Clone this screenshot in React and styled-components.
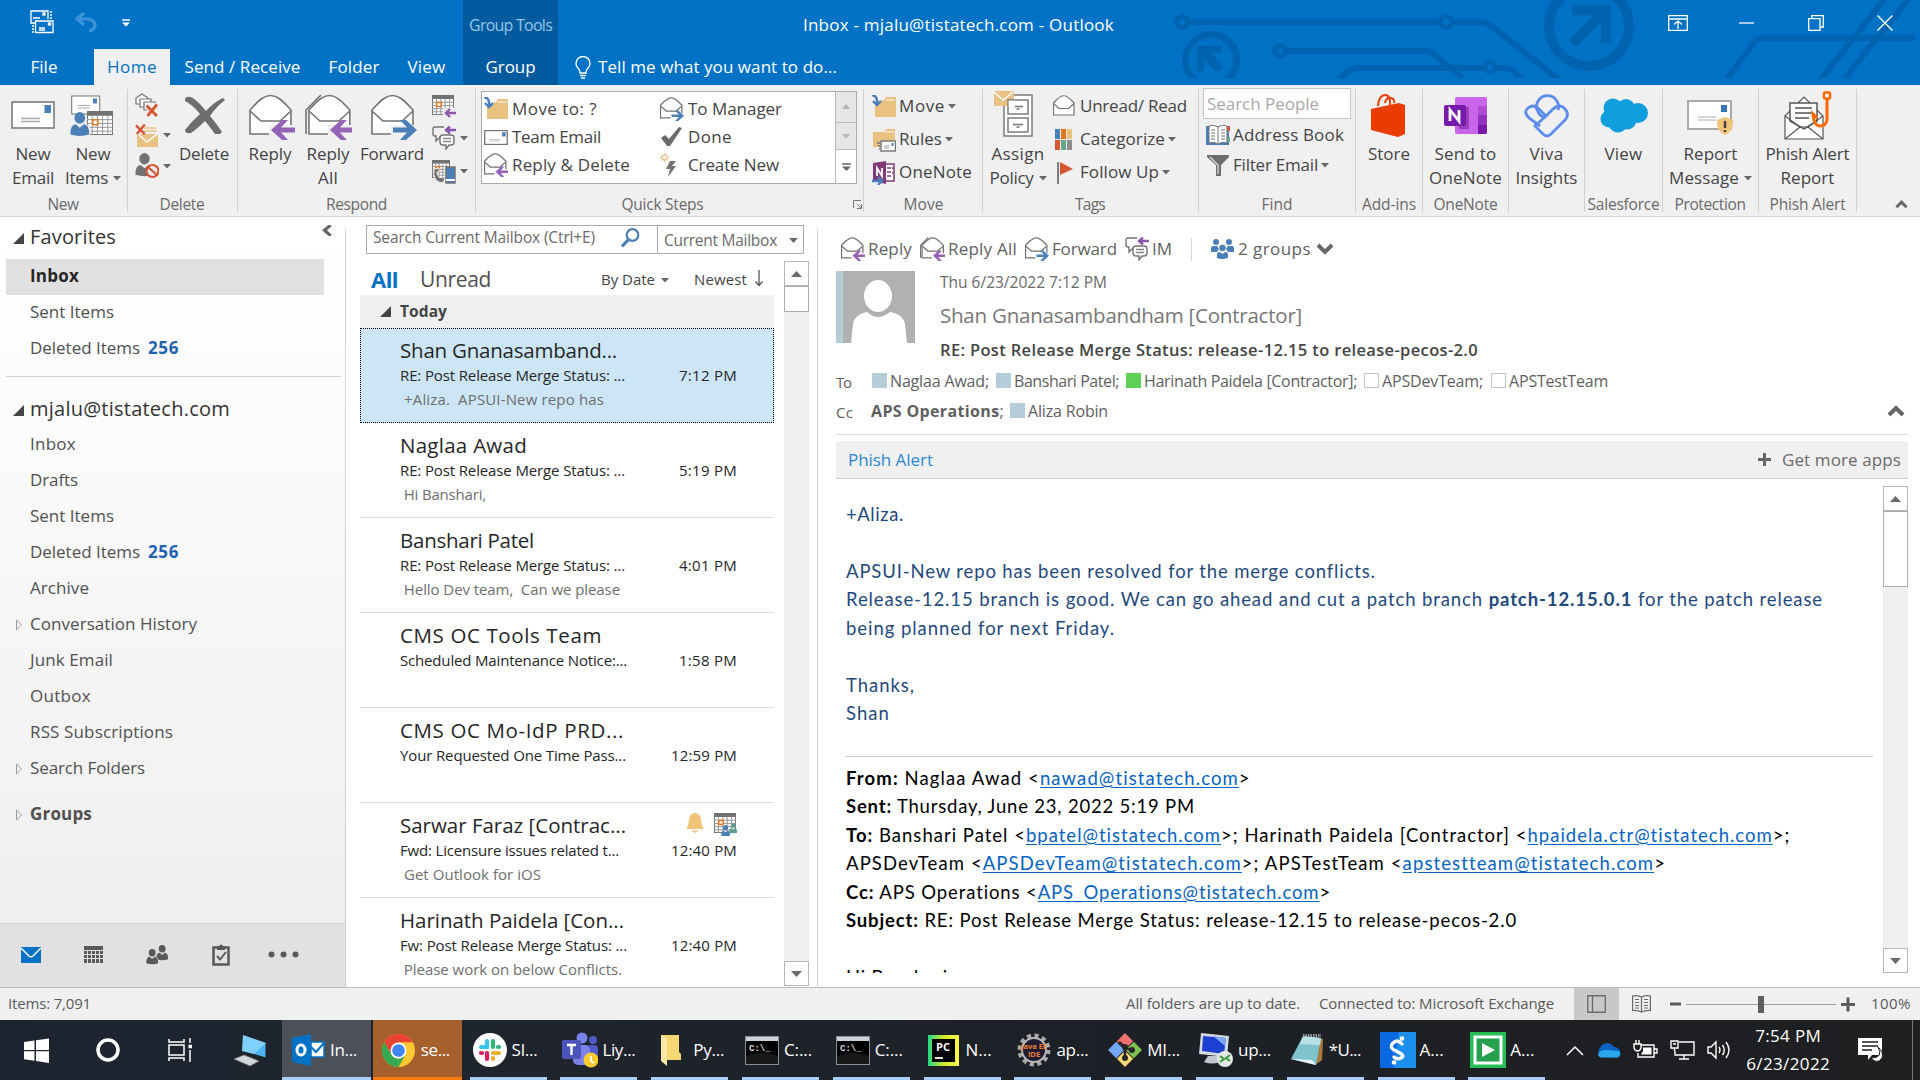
import React, { useLayoutEffect, useRef } from "react";
import styled, { createGlobalStyle, css } from "styled-components";

const Global = createGlobalStyle`
  * { box-sizing: border-box; }
  body { margin: 0; overflow: hidden; background: #fff; }
  svg { display: block; flex: none; }
`;

/* ---------- text ---------- */
const TextSpan = styled.span`
  display: inline-block;
  flex: none;
  white-space: pre;
  padding-bottom: var(--lift, 2px);
  font-size: ${(p) => p.$size || 17}px;
  font-weight: ${(p) => p.$weight || 400};
  color: ${(p) => p.$color || "inherit"};
  margin-left: ${(p) => p.$ml || 0}px;
`;

/* A label whose tracking is spread so that it fills a set width. */
function Text({ w, children, size, weight, color, ml }) {
  const ref = useRef(null);
  useLayoutEffect(() => {
    const el = ref.current;
    if (!w || !el) return;
    el.style.letterSpacing = "0px";
    const natural = el.getBoundingClientRect().width;
    const count = el.textContent.length;
    if (count > 0) el.style.letterSpacing = `${((w + 1 - natural) / count).toFixed(3)}px`;
  }, [w, children]);
  return (
    <TextSpan ref={ref} $size={size} $weight={weight} $color={color} $ml={ml}>
      {children}
    </TextSpan>
  );
}

const Window = styled.div`
  width: 1920px;
  height: 1080px;
  display: flex;
  flex-direction: column;
  font-family: "Open Sans", "Noto Sans", sans-serif;
  line-height: 1;
  color: #444;
  background: #fff;
`;

/* ---------- header ---------- */
const Header = styled.header`
  position: relative;
  height: 85px;
  flex: none;
  background: #0072c6;
  color: #fff;
`;
const Art = styled.svg`
  position: absolute;
  right: 0;
  top: 0;
`;
const TitleRow = styled.div`
  --lift: 0px;
  position: relative;
  height: 49px;
  display: flex;
`;
const QuickBar = styled.div`
  width: 463px;
  padding: 10px 0 0 30px;
  display: flex;
  gap: 21px;
`;
const ContextHead = styled.div`
  width: 95px;
  background: #005a9e;
  color: #94c6ea;
  display: flex;
  align-items: center;
  justify-content: center;
`;
const WindowTitle = styled.div`
  margin-left: 245px;
  display: flex;
  align-items: center;
  flex: 1;
`;
const WindowButton = styled.div`
  width: 69px;
  height: 46px;
  display: flex;
  align-items: center;
  justify-content: center;
`;
const WindowButtons = styled.div`
  display: flex;
  padding-right: 1px;
`;
const TabRow = styled.div`
  position: relative;
  height: 36px;
  display: flex;
  align-items: stretch;
`;
const Tab = styled.div`
  width: ${(p) => p.$w}px;
  margin-left: ${(p) => p.$ml || 0}px;
  display: flex;
  align-items: center;
  justify-content: center;
  ${(p) => p.$active && css`background: #f0f0f0; color: #0072c6;`}
  ${(p) => p.$context && css`background: #005a9e;`}
`;
const TellMe = styled.div`
  display: flex;
  align-items: center;
  padding-left: 17px;
  gap: 7px;
`;

function HeaderArt() {
  const c = "#0063b0";
  return (
    <Art width="750" height="78" viewBox="1170 0 750 78" fill="none" stroke={c} strokeWidth="6">
      <circle cx="1182" cy="22" r="5.5" strokeWidth="5" />
      <path d="M1188 22H1440M1452 22H1481Q1486 22 1490 25L1562 82" />
      <circle cx="1446" cy="22" r="5.5" strokeWidth="4.5" />
      <circle cx="1280" cy="51" r="5.5" strokeWidth="5" />
      <path d="M1286 51H1424Q1430 51 1434 54L1466 81" />
      <path d="M1335 82L1350 70Q1353 68 1358 68H1484M1496 68H1504Q1509 68 1513 71L1524 81" />
      <circle cx="1490" cy="67" r="5" strokeWidth="4.5" />
      <circle cx="1211" cy="60" r="25.5" strokeWidth="7" />
      <path fill={c} stroke="none" d="M1197 46H1222V53H1211L1224 67L1217 73L1204 59V71H1197Z" />
      <circle cx="1589" cy="26" r="40" strokeWidth="10" />
      <path fill={c} stroke="none" d="M1572 5H1611V43H1601V22L1576 47L1569 40L1594 15H1572Z" />
      <path d="M1724 82L1754 43Q1758 38 1764 38H1915M1817 84L1888 -5M1840 84L1912 -5" />
    </Art>
  );
}

/* ---------- ribbon ---------- */
const Ribbon = styled.div`
  height: 132px;
  flex: none;
  display: flex;
  background: #f0f0f0;
  border-bottom: 1px solid #d2d2d2;
`;
const GroupBox = styled.section`
  width: ${(p) => p.$w}px;
  flex: none;
  display: flex;
  flex-direction: column;
  background: linear-gradient(#d0d0d0, #d0d0d0) right 4px / 1px 123px no-repeat;
`;
const GroupBody = styled.div`
  height: 108px;
  display: flex;
  padding-left: ${(p) => p.$pl || 0}px;
`;
const GroupLabel = styled.div`
  --lift: 0px;
  height: 23px;
  display: flex;
  align-items: center;
  justify-content: center;
  color: #6a6a6a;
  padding-right: ${(p) => p.$shift || 0}px;
`;
function Group({ w, pl, label, lw, shift, children, extra }) {
  return (
    <GroupBox $w={w}>
      <GroupBody $pl={pl}>{children}</GroupBody>
      <GroupLabel $shift={shift}>
        {label && <Text size={15.5} w={lw}>{label}</Text>}
        {extra}
      </GroupLabel>
    </GroupBox>
  );
}
const BigButton = styled.div`
  width: ${(p) => p.$w}px;
  flex: none;
  display: flex;
  flex-direction: column;
  align-items: center;
`;
const BigIcon = styled.div`
  height: 57px;
  padding-top: ${(p) => p.$top}px;
  margin-left: ${(p) => p.$shift || 0}px;
`;
const BigLine = styled.div`
  height: 24px;
  display: flex;
  align-items: center;
  gap: 5px;
`;
function Big({ w, top, shift, icon, lines, caret }) {
  return (
    <BigButton $w={w}>
      <BigIcon $top={top} $shift={shift}>{icon}</BigIcon>
      {lines.map(([t, tw], i) => (
        <BigLine key={i}>
          <Text w={tw}>{t}</Text>
          {caret && i === lines.length - 1 && <Caret />}
        </BigLine>
      ))}
    </BigButton>
  );
}
const Stack = styled.div`
  width: ${(p) => p.$w}px;
  flex: none;
  display: flex;
  flex-direction: column;
  padding-top: ${(p) => p.$top || 0}px;
  padding-left: ${(p) => p.$pl || 0}px;
  gap: ${(p) => p.$gap || 0}px;
`;
const SmallRow = styled.div`
  height: ${(p) => p.$h || 33}px;
  display: flex;
  align-items: center;
  gap: ${(p) => (p.$gap === undefined ? 4 : p.$gap)}px;
`;
const Caret = ({ s = 8, c = "#666" }) => (
  <svg width={s} height={s / 2 + 1} viewBox="0 0 8 5"><path d="M0 0H8L4 4.6Z" fill={c} /></svg>
);
const Gallery = styled.div`
  width: 376px;
  height: 93px;
  margin-top: 6px;
  background: #fff;
  border: 1px solid #ababab;
  display: flex;
`;
const GalleryCol = styled.div`
  width: ${(p) => p.$w}px;
  padding: 3px 0 0 2px;
`;
const GalleryScroll = styled.div`
  width: 21px;
  margin-left: auto;
  border-left: 1px solid #b8b8b8;
  display: flex;
  flex-direction: column;
`;
const GalleryCell = styled.div`
  flex: ${(p) => p.$h} 0 0;
  background: ${(p) => (p.$on ? "#fff" : "#e6e6e6")};
  border-bottom: ${(p) => (p.$on ? "none" : "1px solid #b8b8b8")};
  display: flex;
  align-items: center;
  justify-content: center;
`;
const PeopleSearch = styled.div`
  --lift: 0px;
  width: 148px;
  height: 31px;
  margin: 0 0 2px -3px;
  border: 1px solid #c6c6c6;
  background: #fff;
  color: #a8a8a8;
  display: flex;
  align-items: center;
  padding-left: 3px;
`;
const RibbonEnd = styled.div`
  flex: 1;
  display: flex;
  align-items: flex-end;
  justify-content: flex-end;
  padding: 0 12px 7px 0;
`;
const Launcher = styled.svg`
  margin-left: 149px;
  margin-right: -158px;
`;

/* ---------- icons ---------- */
const GR = "#737373", BL = "#4a7fb8", PU = "#9463b8", TAN = "#e9c282", RED = "#d65532";

function OpenMail({ s = 46, arrow, all }) {
  const sw = s > 30 ? 1.6 : 2.4;
  const col = arrow === "fwd" ? BL : PU;
  return (
    <svg width={all ? s * 1.04 : s} height={s} viewBox={all ? "-3 0 48 46" : "0 0 46 46"}>
      {all && <path d="M-2 40V16L13 1" fill="none" stroke={GR} strokeWidth={sw} />}
      <path d="M1 16C7 10 13 1.500 21.500 1.500S36 10 42 16V40H1Z" fill="#fff" stroke={GR} strokeWidth={sw} />
      <path d="M1 17L12 27H31L42 17" fill="none" stroke={GR} strokeWidth={sw} />
      {arrow && <path d="M20 31H46V46H20Z" fill={s > 30 ? "#f0f0f0" : "#fff"} />}
      {arrow === "reply" && <path d="M22 36L33 26H39L32 33.500H46V38.500H32L39 46H33Z" fill={col} />}
      {arrow === "fwd" && <path d="M46 36L35 26H29L36 33.500H22V38.500H36L29 46H35Z" fill={col} />}
    </svg>
  );
}
const MailCard = ({ w = 44, h = 28 }) => (
  <svg width={w} height={h} viewBox="0 0 44 28">
    <rect x="1" y="1" width="42" height="26" fill="#fff" stroke={GR} strokeWidth={w > 30 ? 1.5 : 2.4} />
    <rect x="33.500" y="4" width="6.500" height="8" fill={BL} />
    <path d="M10 17.500H29M10 20.500H29" stroke="#aaa" strokeWidth="1.300" />
  </svg>
);
const Person = ({ x = 0, y = 0, k = 1, c = BL }) => (
  <g transform={`translate(${x} ${y}) scale(${k})`} fill={c}>
    <ellipse cx="10" cy="6" rx="5.500" ry="6" />
    <path d="M0.500 23Q0 13 6 12.500L10 16L14 12.500Q20 13 19.500 23Q10 26 0.500 23Z" />
  </g>
);
const CalGrid = ({ x = 0, y = 0, w = 24, h = 22 }) => (
  <g transform={`translate(${x} ${y})`}>
    <rect x=".5" y=".5" width={w - 1} height={h - 1} fill="#fff" stroke={GR} />
    <rect width={w} height={h * 0.2} fill={GR} />
    {[0.2, 0.4, 0.6, 0.8].map((f) => (
      <path key={f} d={`M${w * f} ${h * 0.2}V${h}M0 ${h * (0.2 + f * 0.8)}H${w}`} stroke="#999" strokeWidth="1" />
    ))}
    <rect x={w * 0.22} y={h * 0.37} width={w * 0.2} height={h * 0.2} fill="#fff" stroke="#e07a28" strokeWidth="1.500" />
  </g>
);
const NewItems = () => (
  <svg width="44" height="42" viewBox="0 0 44 42">
    <rect x="1.700" y="1" width="28" height="18" fill="#fff" stroke={GR} />
    <rect x="23" y="3.500" width="4" height="5" fill={BL} />
    <path d="M8 10.500H20M8 13H20" stroke="#aaa" />
    <CalGrid x={17} y={16} w={26} h={24} />
    <path d="M0 20H17V30H20V42H0Z" fill="#f0f0f0" />
    <Person x={0} y={17} k={0.98} />
  </svg>
);
const Xmark = ({ x, y, k = 1, c = RED, sw = 3 }) => (
  <path transform={`translate(${x} ${y}) scale(${k})`} d="M0 1L11 12M11 0L1 12" stroke={c} strokeWidth={sw} fill="none" />
);
const Ignore = () => (
  <svg width="24" height="24" viewBox="0 0 24 24" fill="#fff" stroke={GR} strokeWidth="1.200">
    <path d="M1 11V5L7 1L13 5V11Z" /><path d="M5 14V6H16V14Z" /><path d="M9 17V9H20V17Z" />
    <path d="M12 10H24V24H12Z" fill="#f0f0f0" stroke="none" /><Xmark x={11.500} y={11.500} k={0.95} />
  </svg>
);
const CleanUp = () => (
  <svg width="24" height="24" viewBox="0 0 24 24">
    <path d="M9 4H21M9 7H22" stroke={TAN} strokeWidth="1.500" />
    <rect x="2" y="10" width="21" height="13" fill={TAN} />
    <path d="M3 10L12 18L22 10" fill="none" stroke="#fff" strokeWidth="1.500" /><Xmark x={1} y={0.500} k={0.8} />
  </svg>
);
const Junk = () => (
  <svg width="24" height="26" viewBox="0 0 24 26">
    <Person x={0} y={0} k={0.95} c={GR} />
    <circle cx="17.500" cy="18" r="6" fill="#f0f0f0" stroke={RED} strokeWidth="2.200" />
    <path d="M13 14L22 22" stroke={RED} strokeWidth="2.200" />
  </svg>
);
const DeleteX = () => (
  <svg width="42" height="38" viewBox="0 0 42 38">
    <path d="M1 3Q3-1 9 2Q17 8 22 15Q30 6 39 2L41 4Q32 11 26 20Q32 27 38 36L36 38H31Q26 31 21 25Q13 33 7 37Q1 38 1 34Q7 26 16 18Q9 9 1 5Z" fill="#6d6d6d" />
  </svg>
);
const Meeting = () => (
  <svg width="24" height="23" viewBox="0 0 24 23">
    <CalGrid x={0} y={0} w={22} h={20} /><path d="M11 13H24V23H11Z" fill="#f0f0f0" />
    <path d="M24 18H15M18 14L14 18L18 22" stroke="#8b57ad" strokeWidth="2.400" fill="none" />
  </svg>
);
const IM = () => (
  <svg width="24" height="24" viewBox="0 0 24 24" fill="#fff" stroke={GR} strokeWidth="1.400">
    <path d="M12 1H3Q1 1 1 3V8Q1 10 3 10H4V15L9 10" fill="none" />
    <path d="M11 9H19Q22 9 22 12V16Q22 19 19 19H17L14 23V19H11Q8 19 8 16V12Q8 9 11 9Z" />
    <path d="M11 12.500H19M11 15.500H19" stroke="#888" />
    <path d="M24 4H15M18 0.500L14 4L18 7.500" stroke="#8b57ad" strokeWidth="2.400" fill="none" />
  </svg>
);
const Phone = () => (
  <svg width="24" height="24" viewBox="0 0 24 24">
    <CalGrid x={0} y={0} w={18} h={18} />
    <path d="M2 9Q0 22 11 23L13 18L9 17L8 18Q5 15 5 12L7 12V8Z" fill={GR} stroke="#f0f0f0" />
    <rect x="14" y="7" width="9" height="16" fill={BL} stroke={GR} strokeWidth="1.500" />
    <path d="M14 20H23" stroke="#fff" strokeWidth="2" />
  </svg>
);
const FolderMove = ({ mail }) => (
  <svg width="24" height="24" viewBox="0 0 24 24">
    <path d={mail ? "M1 4H12L14 1H23V19H1Z" : "M3 7L12 5L14 2H24V22H3Z"} fill={TAN} />
    <path d={mail ? "M13 4H22" : "M14 5H23"} stroke="#f8e8cc" strokeWidth="1.500" />
    {!mail && <path d="M0 0Q6 1 5 9M1 6L5 10L9 6" fill="none" stroke={BL} strokeWidth="2.400" />}
    {mail && <><rect x="9" y="13" width="14.500" height="10" fill="#fff" stroke={GR} strokeWidth="1.400" /><path d="M12 18H17M12 20H17" stroke="#999" /><rect x="19.500" y="15" width="2" height="3" fill={BL} /><path d="M5 15H8M6 18H8M7 21H8" stroke={GR} strokeWidth="1.500" /></>}
  </svg>
);
const Check = () => (
  <svg width="24" height="20" viewBox="0 0 24 20"><path d="M1 11L5 8L9 12L19 0L22 1L10 19H7Z" fill="#6a6a6a" /></svg>
);
const Bolt = () => (
  <svg width="24" height="24" viewBox="0 0 24 24">
    <path d="M10 8H16L12 13H16L8 24L10 16H6Z" fill={GR} />
    <path d="M4.500 0V9M0 4.500H9M1.500 1.500L7.500 7.500M7.500 1.500L1.500 7.500" stroke={TAN} strokeWidth="1.400" />
    <circle cx="4.500" cy="4.500" r="1.800" fill="#fff" />
  </svg>
);
const OneNoteMove = () => (
  <svg width="24" height="24" viewBox="0 0 24 24">
    <rect x="12" y="3" width="10" height="17" fill="#fff" stroke="#80397b" strokeWidth="1.500" />
    <path d="M15 7H19M15 11H19M15 15H19M21 6V8M21 11V13" stroke="#80397b" strokeWidth="1.500" />
    <path d="M1 2L14 0V23L1 20Z" fill="#80397b" />
    <path d="M5 15V7L10 15V7" stroke="#fff" strokeWidth="1.800" fill="none" />
    <path d="M0 20H9M6 16L10 20L6 24" stroke={BL} strokeWidth="2.400" fill="none" />
  </svg>
);
const Cabinet = () => (
  <svg width="40" height="46" viewBox="0 0 40 46" fill="#fff" stroke={GR} strokeWidth="1.400">
    <rect x="10" y="4" width="28" height="41" />
    <rect x="14" y="9" width="20" height="14" /><rect x="14" y="27" width="20" height="14" />
    <path d="M19 15.500H29M19 33.500H29" /><path d="M22.500 18H25.500M22.500 36H25.500" />
    <rect x="0" y="0" width="20" height="15" fill={TAN} stroke="none" />
    <path d="M0 1L9 9L19 1" stroke="#fff" fill="none" />
    <path d="M14 15V9H20" /><path d="M14.700 9.700H21V16H14.700Z" stroke="none" />
  </svg>
);
const Swatches = () => (
  <svg width="24" height="22" viewBox="0 0 24 22">
    <rect x="2" width="5" height="10" fill={BL} /><rect x="8" width="5" height="10" fill="#e2761d" /><rect x="14" width="5" height="10" fill={TAN} />
    <rect x="2" y="11" width="5" height="10" fill={RED} /><rect x="8" y="11" width="5" height="10" fill="#68a58f" /><rect x="14" y="11" width="5" height="10" fill="#8c8c8c" />
  </svg>
);
const Flag = () => (
  <svg width="24" height="24" viewBox="0 0 24 24"><path d="M5 1V23" stroke={GR} strokeWidth="1.800" /><path d="M7 1L20 8L7 14Z" fill={RED} /></svg>
);
const Book = () => (
  <svg width="24" height="21" viewBox="0 0 24 21">
    <path d="M0 1H23V20H0Z" fill={BL} /><path d="M20 1H24V6H20Z" fill={RED} /><path d="M20 12H24V17H20Z" fill="#68a58f" />
    <path d="M3 1Q8-1 12 2Q16-1 21 1V18Q16 16 12 19Q8 16 3 18Z" fill="#fff" stroke={GR} />
    <path d="M12 2V18M5 5H9M5 8H9M5 11H9M5 14H9M15 5H19M15 8H19M15 11H19M15 14H19" stroke={GR} />
  </svg>
);
const Funnel = () => (
  <svg width="24" height="22" viewBox="0 0 24 22"><path d="M1 0H23V2L15 10V21L10 21V10L1 2Z" fill="#6d6d6d" /><path d="M4 2L12 10V19" fill="none" stroke="#e8e8e8" strokeWidth="1.200" /></svg>
);
const Store = () => (
  <svg width="36" height="43" viewBox="0 0 36 43">
    <path d="M7 12Q8 1 14 1Q20 1 19 11M14 9Q15 3 20 4Q24 5 23 9" fill="none" stroke="#eb3c00" strokeWidth="2" />
    <path d="M0 15L28 9L34 11V40L27 43L0 36Z" fill="#eb3c00" />
  </svg>
);
const OneNoteApp = () => (
  <svg width="43" height="37" viewBox="0 0 43 37">
    <rect x="11" width="32" height="37" rx="2" fill="#ca64ea" />
    <path d="M34 9H43V18H34Z" fill="#ae4bd5" /><path d="M34 18H43V28H34Z" fill="#9332bf" /><path d="M34 28H43V35Q43 37 41 37H34Z" fill="#7719aa" />
    <path d="M15 10H25V32H15Z" fill="#5a1580" opacity=".45" /><rect y="8" width="22" height="21" rx="2" fill="#7719aa" />
    <path d="M6 24V13L15 24V13" stroke="#fff" strokeWidth="2.800" fill="none" />
  </svg>
);
const Viva = () => (
  <svg width="46" height="46" viewBox="0 0 46 46" fill="none" stroke="#5b8def" strokeWidth="2.800">
    <path d="M13 18A11 11 0 1 1 34 18" /><path d="M13 17Q15 24 20 25" />
    <path d="M16 34L5 26Q-1 20 4 16Q9 12 14 16L22 24L29 17Q36 11 41 17Q46 22 41 28L27 42Q23 46 19 42L10 33" />
    <path d="M22 24L11 34" />
  </svg>
);
const Salesforce = () => (
  <svg width="48" height="35" viewBox="0 0 48 35" fill="#0f9fdf">
    <circle cx="13" cy="10" r="9.500" /><circle cx="26" cy="10" r="9" /><circle cx="38" cy="15" r="10" /><circle cx="9" cy="21" r="8.500" /><circle cx="18" cy="25" r="9.500" /><circle cx="27" cy="22" r="9.500" />
  </svg>
);
const ReportMail = () => (
  <svg width="47" height="37" viewBox="0 0 47 37">
    <rect x="1" y="2" width="43" height="28" fill="#fff" stroke="#aaa" strokeWidth="2" />
    <rect x="34" y="6" width="6" height="7" fill="#3a75b5" /><path d="M11 18H29M11 21H29" stroke="#ccc" strokeWidth="1.500" />
    <path d="M38 18L46 21Q47 32 38 36Q29 32 30 21Z" fill="#efc477" /><path d="M38 22V29M38 31V33" stroke="#444" strokeWidth="2.500" />
  </svg>
);
const PhishHook = () => (
  <svg width="48" height="49" viewBox="0 0 48 49">
    <path d="M1 25L20 6L39 25V48H1Z" fill="#fff" stroke="#555" strokeWidth="1.200" />
    <path d="M6 30V12H33V30L20 38Z" fill="#fff" stroke="#555" strokeWidth="1.500" />
    <path d="M11 17H28M11 22H28M11 27H25" stroke="#555" strokeWidth="1.300" />
    <path d="M1 25L16 36H24L39 25M1 48L16 36M39 48L24 36" fill="none" stroke="#555" strokeWidth="1.200" />
    <path d="M43 8V29Q42 35 36 35Q30 35 29 23L33 27" fill="none" stroke="#ff6a00" strokeWidth="3" />
    <rect x="40" y="1.500" width="6" height="6" rx="1" fill="#fff" stroke="#ff6a00" strokeWidth="2.600" />
  </svg>
);
const Chevron = ({ dir = "down", w = 18, sw = 4, c = "#666" }) => {
  const d = { down: "M2 2L9 9L16 2", up: "M2 10L9 3L16 10", left: "M12 0L5 6L12 12" }[dir];
  return <svg width={w} height={(w * 12) / 18} viewBox="0 0 18 12"><path d={d} fill="none" stroke={c} strokeWidth={sw} /></svg>;
};

function RibbonBar() {
  return (
    <Ribbon>
      <Group w={128} pl={3} label="New" lw={30} shift={2}>
        <Big w={60} top={16} icon={<MailCard />} lines={[["New", 34], ["Email", 41]]} />
        <Big w={60} top={10} shift={-3} icon={<NewItems />} lines={[["New", 34], ["Items", 42]]} caret />
      </Group>
      <Group w={110} pl={7} label="Delete" lw={44} shift={2}>
        <Stack $w={42} $top={5}>
          <SmallRow $h={29}><Ignore /></SmallRow>
          <SmallRow $h={33}><CleanUp /><Caret /></SmallRow>
          <SmallRow $h={28}><Junk /><Caret /></SmallRow>
        </Stack>
        <Big w={54} top={11} shift={2} icon={<DeleteX />} lines={[["Delete", 49]]} />
      </Group>
      <Group w={238} pl={3} label="Respond" lw={60} shift={1}>
        <Big w={58} top={9} shift={4} icon={<OpenMail arrow="reply" />} lines={[["Reply", 42]]} />
        <Big w={58} top={9} shift={1} icon={<OpenMail arrow="reply" all />} lines={[["Reply", 42], ["All", 19]]} />
        <Big w={70} top={9} shift={4} icon={<OpenMail arrow="fwd" />} lines={[["Forward", 63]]} />
        <Stack $w={40} $top={6} $pl={5}>
          <SmallRow $h={30}><Meeting /></SmallRow>
          <SmallRow $h={34}><IM /><Caret /></SmallRow>
          <SmallRow $h={33}><Phone /><Caret /></SmallRow>
        </Stack>
      </Group>
      <Group w={388} pl={5} label="Quick Steps" lw={81} shift={15}
        extra={<Launcher width="9" height="9" viewBox="0 0 9 9"><path d="M.5 8V.5H8M4 4L8 8M8.500 4V8.500H4" fill="none" stroke="#777" /></Launcher>}>
        <Gallery>
          <GalleryCol $w={176}>
            <SmallRow $h={28}><FolderMove /><Text w={84}>Move to: ?</Text></SmallRow>
            <SmallRow $h={28}><MailCard w={24} h={15} /><Text w={88}>Team Email</Text></SmallRow>
            <SmallRow $h={28}><OpenMail s={24} arrow="reply" /><Text w={117}>Reply & Delete</Text></SmallRow>
          </GalleryCol>
          <GalleryCol $w={160}>
            <SmallRow $h={28}><OpenMail s={24} arrow="fwd" /><Text w={93}>To Manager</Text></SmallRow>
            <SmallRow $h={28}><Check /><Text w={43}>Done</Text></SmallRow>
            <SmallRow $h={28}><Bolt /><Text w={90}>Create New</Text></SmallRow>
          </GalleryCol>
          <GalleryScroll>
            <GalleryCell $h={31}><svg width="8" height="5"><path d="M0 5H8L4 0Z" fill="#b5b5b5" /></svg></GalleryCell>
            <GalleryCell $h={28}><Caret c="#b5b5b5" /></GalleryCell>
            <GalleryCell $h={34} $on><svg width="9" height="8"><path d="M0 1H9" stroke="#666" strokeWidth="1.500" /><path d="M0 3.500H9L4.500 8Z" fill="#666" /></svg></GalleryCell>
          </GalleryScroll>
        </Gallery>
      </Group>
      <Group w={119} pl={8} label="Move" lw={39}>
        <Stack $w={108} $top={5}>
          <SmallRow $gap={3}><FolderMove /><Text w={45}>Move</Text><Caret /></SmallRow>
          <SmallRow $gap={3}><FolderMove mail /><Text w={42}>Rules</Text><Caret /></SmallRow>
          <SmallRow $gap={3}><OneNoteMove /><Text w={72}>OneNote</Text></SmallRow>
        </Stack>
      </Group>
      <Group w={216} pl={4} label="Tags" lw={29} shift={2}>
        <Big w={62} top={6} shift={-8} icon={<Cabinet />} lines={[["Assign", 52], ["Policy", 43]]} caret />
        <Stack $w={148} $top={5} $pl={4}>
          <SmallRow><OpenMail s={23} /><Text w={106}>Unread/ Read</Text></SmallRow>
          <SmallRow $gap={3}><Swatches /><Text w={84}>Categorize</Text><Caret /></SmallRow>
          <SmallRow $gap={3}><Flag /><Text w={78}>Follow Up</Text><Caret /></SmallRow>
        </Stack>
      </Group>
      <Group w={157} pl={7} label="Find" lw={30} shift={1}>
        <Stack $w={150} $top={3}>
          <PeopleSearch><Text w={111}>Search People</Text></PeopleSearch>
          <SmallRow $h={28} $gap={3}><Book /><Text w={110}>Address Book</Text></SmallRow>
          <SmallRow $h={33} $gap={3}><Funnel /><Text w={84}>Filter Email</Text><Caret /></SmallRow>
        </Stack>
      </Group>
      <Group w={67} label="Add-ins" lw={53} shift={1}><Big w={66} top={9} icon={<Store />} lines={[["Store", 41]]} /></Group>
      <Group w={86} label="OneNote" lw={63} shift={1}><Big w={85} top={12} icon={<OneNoteApp />} lines={[["Send to", 61], ["OneNote", 72]]} /></Group>
      <Group w={76}><Big w={75} top={7} icon={<Viva />} lines={[["Viva", 33], ["Insights", 61]]} /></Group>
      <Group w={78} label="Salesforce" lw={71} shift={1}><Big w={77} top={13} icon={<Salesforce />} lines={[["View", 37]]} /></Group>
      <Group w={96} label="Protection" lw={70} shift={2}><Big w={95} top={14} icon={<ReportMail />} lines={[["Report", 53], ["Message", 69]]} caret /></Group>
      <Group w={98} label="Phish Alert" lw={75} shift={1}><Big w={97} top={6} icon={<PhishHook />} lines={[["Phish Alert", 83], ["Report", 53]]} /></Group>
      <RibbonEnd><Chevron dir="up" w={13} /></RibbonEnd>
    </Ribbon>
  );
}

/* ---------- main area ---------- */
const Main = styled.main`
  height: 770px;
  flex: none;
  display: flex;
`;
const Side = styled.nav`
  width: 346px;
  display: flex;
  flex-direction: column;
  background: linear-gradient(#d0d0d0, #d0d0d0) right 12px / 1px 758px no-repeat,
    linear-gradient(#fff 0px, #fcfcfc 180px, #efefef 700px);
`;
const Folders = styled.div`
  height: 706px;
  padding-right: 1px;
`;
const SideHead = styled.div`
  height: ${(p) => p.$h}px;
  padding-left: 13px;
  display: flex;
  align-items: center;
  gap: 6px;
  color: #333;
`;
const Collapse = styled.div`
  margin: -15px 9px 0 auto;
`;
const FolderRow = styled.div`
  --lift: 3px;
  height: 36px;
  margin-left: 6px;
  margin-top: ${(p) => p.$mt || 0}px;
  width: 318px;
  padding-left: 8px;
  display: flex;
  align-items: center;
  color: ${(p) => (p.$sel ? "#262626" : "#505050")};
  background: ${(p) => (p.$sel ? "#e1e1e1" : "transparent")};
`;
const Marker = styled.div`
  width: 16px;
`;
const SideLine = styled.div`
  height: 1px;
  margin: 9px 4px 10px 6px;
  background: #d2d2d2;
`;
const NavBar = styled.div`
  height: 64px;
  margin-right: 1px;
  padding-bottom: 2px;
  border-top: 1px solid #cfcfcf;
  background: #e1e1e1;
  display: flex;
  align-items: center;
`;
const NavItem = styled.div`
  width: ${(p) => p.$w}px;
  display: flex;
  justify-content: center;
`;
const OpenTri = () => <svg width="11" height="11"><path d="M11 0V11H0Z" fill="#444" /></svg>;
const ClosedTri = () => <svg width="10" height="12"><path d="M2.500 1L7.500 6L2.500 11Z" fill="none" stroke="#999" /></svg>;

const accountFolders = [
  ["Inbox", 45], ["Drafts", 47], ["Sent Items", 83], ["Deleted Items", 109, "256"], ["Archive", 58],
  ["Conversation History", 166, null, true], ["Junk Email", 82], ["Outbox", 60], ["RSS Subscriptions", 142],
  ["Search Folders", 114, null, true],
];
function Folder({ name, w, count, closed, sel, bold, mt }) {
  return (
    <FolderRow $sel={sel} $mt={mt}>
      <Marker>{closed && <ClosedTri />}</Marker>
      <Text w={w} weight={sel || bold ? 700 : 400}>{name}</Text>
      {count && <Text w={30} weight={700} color="#1e62b0" ml={8}>{count}</Text>}
    </FolderRow>
  );
}
function Sidebar() {
  return (
    <Side>
      <Folders>
        <SideHead $h={42}><OpenTri /><Text size={20} w={85}>Favorites</Text><Collapse><Chevron dir="left" w={16} sw={3.600} /></Collapse></SideHead>
        <Folder name="Inbox" w={48} sel />
        <Folder name="Sent Items" w={83} />
        <Folder name="Deleted Items" w={109} count="256" />
        <SideLine />
        <SideHead $h={46}><OpenTri /><Text size={20} w={199}>mjalu@tistatech.com</Text></SideHead>
        {accountFolders.map(([n, w, c, t]) => <Folder key={n} name={n} w={w} count={c} closed={t} mt={n === "Inbox" ? -6 : 0} />)}
        <Folder name="Groups" w={61} closed bold mt={10} />
      </Folders>
      <NavBar>
        <NavItem $w={62}><svg width="20" height="16"><path d="M0 0H20V16H0Z" fill="#0072c6" /><path d="M0 1L8 9Q10 10.500 12 9L20 1" fill="none" stroke="#fff" strokeWidth="1.500" /></svg></NavItem>
        <NavItem $w={63}>
          <svg width="19" height="17"><path d="M0 0H19V4H0Z" fill="#595959" /><path d="M1.500 5V17M5.500 5V17M9.500 5V17M13.500 5V17M17.500 5V17" stroke="#595959" strokeWidth="3" /><path d="M0 8.500H19M0 12.500H19" stroke="#e1e1e1" /></svg>
        </NavItem>
        <NavItem $w={65}><svg width="24" height="20"><Person x={10} y={0} k={0.62} c="#595959" /><g stroke="#e1e1e1" strokeWidth="2"><Person x={0} y={4} k={0.62} c="#595959" /></g><Person x={0} y={4} k={0.62} c="#595959" /></svg></NavItem>
        <NavItem $w={61}><svg width="18" height="22"><path d="M1.500 3.500H16.500V20.500H1.500Z" fill="none" stroke="#595959" strokeWidth="2.500" /><path d="M5 2H7Q9-1 11 2H13V6H5Z" fill="#595959" /><path d="M5 12L8 15.500L14 8" fill="none" stroke="#595959" strokeWidth="2" /></svg></NavItem>
        <NavItem $w={64}><svg width="31" height="7" fill="#595959"><circle cx="3.500" cy="3.500" r="3" /><circle cx="15.500" cy="3.500" r="3" /><circle cx="27.500" cy="3.500" r="3" /></svg></NavItem>
      </NavBar>
    </Side>
  );
}

const ListPane = styled.section`
  width: 472px;
  padding: 8px 0 0 14px;
  background: linear-gradient(#d0d0d0, #d0d0d0) right 12px / 1px 758px no-repeat;
  display: flex;
  flex-direction: column;
`;
const SearchBox = styled.div`
  --lift: 0px;
  width: 438px;
  height: 29px;
  margin-left: 6px;
  border: 1px solid #a6abb3;
  display: flex;
  color: #6a6a6a;
`;
const SearchField = styled.div`
  width: 291px;
  padding: 0 17px 3px 6px;
  border-right: 1px solid #a6abb3;
  display: flex;
  align-items: center;
  justify-content: space-between;
`;
const Scope = styled.div`
  flex: 1;
  padding: 3px 5px 0 6px;
  display: flex;
  align-items: center;
  justify-content: space-between;
`;
const ListSplit = styled.div`
  display: flex;
  height: 733px;
`;
const ListMain = styled.div`
  width: 414px;
  height: 733px;
  overflow: hidden;
`;
const FilterRow = styled.div`
  height: 41px;
  padding: 11px 0 0 11px;
  display: flex;
  align-items: center;
`;
const DayHead = styled.div`
  --lift: 0px;
  height: 33px;
  padding-left: 20px;
  gap: 9px;
  background: #f0f0f0;
  display: flex;
  align-items: center;
`;
const Mail = styled.article`
  height: 95px;
  padding: 11px 37px 0 40px;
  border-bottom: 1px solid #dcdcdc;
  ${(p) => p.$sel && css`
    background: #cde6f7;
    border: 1px dotted #000;
    padding: 10px 36px 0 39px;
  `}
`;
const MailLine = styled.div`
  --lift: ${(p) => p.$lift || 3}px;
  height: ${(p) => p.$h}px;
  display: flex;
  align-items: center;
  justify-content: space-between;
  color: ${(p) => p.$c};
`;
const MailIcons = styled.div`
  display: flex;
  gap: 10px;
  margin-top: -4px;
`;
const Scroll = styled.div`
  width: 25px;
  margin-left: ${(p) => p.$ml || 0}px;
  margin-top: ${(p) => p.$mt || 0}px;
  height: ${(p) => p.$h}px;
  background: #f0f0f0;
  display: flex;
  flex-direction: column;
`;
const ScrollButton = styled.div`
  height: 25px;
  border: 1px solid #b5b5b5;
  background: #fff;
  display: flex;
  align-items: center;
  justify-content: center;
`;
const Thumb = styled.div`
  height: ${(p) => p.$h}px;
  border: 1px solid #ababab;
  background: #fff;
  margin-bottom: auto;
`;
function ScrollBar({ h, thumb, ml, mt }) {
  return (
    <Scroll $h={h} $ml={ml} $mt={mt}>
      <ScrollButton><svg width="11" height="6"><path d="M0 6H11L5.500 0Z" fill="#6a6a6a" /></svg></ScrollButton>
      <Thumb $h={thumb} />
      <ScrollButton><svg width="11" height="6"><path d="M0 0H11L5.500 6Z" fill="#6a6a6a" /></svg></ScrollButton>
    </Scroll>
  );
}
const RE = "RE: Post Release Merge Status: ...";
const mails = [
  { n: "Shan Gnanasamband...", nw: 216, s: RE, sw: 224, t: "7:12 PM", p: " +Aliza.  APSUI-New repo has", pw: 203, sel: true },
  { n: "Naglaa Awad", nw: 126, s: RE, sw: 224, t: "5:19 PM", p: " Hi Banshari,", pw: 85 },
  { n: "Banshari Patel", nw: 133, s: RE, sw: 224, t: "4:01 PM", p: " Hello Dev team,  Can we please", pw: 219 },
  { n: "CMS OC Tools Team", nw: 201, s: "Scheduled Maintenance Notice:...", sw: 226, t: "1:58 PM" },
  { n: "CMS OC Mo-IdP PRD...", nw: 223, s: "Your Requested One Time Pass...", sw: 225, t: "12:59 PM" },
  { n: "Sarwar Faraz [Contrac...", nw: 225, s: "Fwd: Licensure issues related t...", sw: 218, t: "12:40 PM", p: " Get Outlook for iOS", pw: 140, icons: true },
  { n: "Harinath Paidela [Con...", nw: 223, s: "Fw: Post Release Merge Status: ...", sw: 226, t: "12:40 PM", p: " Please work on below Conflicts.", pw: 221 },
];
const FilterMark = styled.div`
  margin-left: ${(p) => p.$ml}px;
`;
function MessageList() {
  return (
    <ListPane>
      <SearchBox>
        <SearchField>
          <Text size={15.500} w={221}>Search Current Mailbox (Ctrl+E)</Text>
          <svg width="19" height="20" viewBox="0 0 19 20"><circle cx="11.500" cy="7" r="5.800" fill="none" stroke={BL} strokeWidth="2.200" /><path d="M7.500 11.500L1 18.500" stroke={BL} strokeWidth="3.200" /></svg>
        </SearchField>
        <Scope><Text size={15.500} w={112}>Current Mailbox</Text><Caret s={9} /></Scope>
      </SearchBox>
      <ListSplit>
        <ListMain>
          <FilterRow>
            <Text size={22} weight={700} color="#0072c6" w={26}>All</Text>
            <Text size={21} w={70} ml={22} color="#505050">Unread</Text>
            <Text size={15} w={53} ml={110}>By Date</Text>
            <FilterMark $ml={6}><Caret /></FilterMark>
            <Text size={15} w={52} ml={25}>Newest</Text>
            <FilterMark $ml={8}><svg width="8" height="20"><path d="M4 0V15M.5 11.500L4 15.500L7.500 11.500" fill="none" stroke="#555" strokeWidth="1.300" /></svg></FilterMark>
          </FilterRow>
          <DayHead><OpenTri /><Text size={15.500} weight={700} w={46}>Today</Text></DayHead>
          {mails.map((m) => (
            <Mail key={m.n} $sel={m.sel}>
              <MailLine $h={25} $c="#262626">
                <Text size={20.500} w={m.nw}>{m.n}</Text>
                {m.icons && (
                  <MailIcons>
                    <svg width="18" height="20"><path d="M1 14Q3 11 3 6Q4 0 9 0T15 6Q15 11 17 14V16H1Z" fill="#efc477" /><path d="M5 17.500H13L9 20Z" fill="#efc477" /></svg>
                    <svg width="23" height="23"><CalGrid w={22} h={20} /><Person x={15} y={10} k={0.42} c="#5b9f8e" /><Person x={7} y={12} k={0.46} /></svg>
                  </MailIcons>
                )}
              </MailLine>
              <MailLine $h={26} $c="#262626" $lift={4}><Text size={15} w={m.sw}>{m.s}</Text><Text size={15} w={m.t.length > 7 ? 65 : 57}>{m.t}</Text></MailLine>
              {m.p && <MailLine $h={23} $c="#6e6e6e" $lift={4}><Text size={15} w={m.pw}>{m.p}</Text></MailLine>}
            </Mail>
          ))}
        </ListMain>
        <ScrollBar h={725} thumb={26} ml={10} mt={7} />
      </ListSplit>
    </ListPane>
  );
}

const Reading = styled.section`
  --lift: 0px;
  width: 1102px;
  padding: 15px 11px 0 18px;
  display: flex;
  flex-direction: column;
`;
const Actions = styled.div`
  --lift: 2px;
  height: 34px;
  padding-left: 5px;
  display: flex;
  align-items: center;
  color: #5f5f5f;
`;
const Action = styled.div`
  display: flex;
  align-items: center;
  gap: ${(p) => p.$gap || 3}px;
  margin-right: ${(p) => p.$mr}px;
`;
const Divider = styled.div`
  width: 1px;
  height: 23px;
  margin: 0 19px 0 19px;
  background: #d8d8d8;
`;
const Envelope = styled.div`
  height: 100px;
  padding-top: 5px;
  display: flex;
  gap: 25px;
`;
const Sender = styled.div`
  display: flex;
  flex-direction: column;
  color: #6a6a6a;
`;
const SenderLine = styled.div`
  height: ${(p) => p.$h}px;
  display: flex;
  align-items: center;
`;
const Recipients = styled.div`
  height: 30px;
  display: flex;
  align-items: center;
  color: #5f5f5f;
`;
const RecipientKind = styled.div`
  width: 35px;
  padding-top: 1px;
`;
const Presence = styled.div`
  width: 15px;
  height: 15px;
  flex: none;
  margin: 0 3px 1px 1px;
  background: ${(p) => p.$c};
  border: ${(p) => (p.$c === "#fff" ? "1px solid #c4c4c4" : "none")};
`;
const Spacer = styled.div`
  width: ${(p) => p.$w}px;
`;
const Rule = styled.div`
  height: 1px;
  margin-top: ${(p) => p.$mt}px;
  margin-right: 1px;
  background: #dcdcdc;
`;
const AppBar = styled.div`
  height: 38px;
  margin-top: 6px;
  margin-right: 1px;
  padding: 0 7px 0 12px;
  display: flex;
  align-items: center;
  justify-content: space-between;
  background: #f0f0f0;
  border-bottom: 1px solid #cfcfcf;
  color: #6a6a6a;
`;
const MoreApps = styled.div`
  display: flex;
  align-items: center;
  gap: 11px;
`;
const BodyRow = styled.div`
  --lift: 1px;
  display: flex;
  justify-content: space-between;
  padding: 7px 1px 0 10px;
`;
const Body = styled.div`
  width: 1027px;
  height: 487px;
  padding-top: 14px;
  overflow: hidden;
  color: #1f497d;
  font-family: Lato, "Open Sans", sans-serif;
`;
const BodyLine = styled.div`
  height: 28.5px;
  display: flex;
  align-items: center;
  color: ${(p) => (p.$quoted ? "#000" : "inherit")};
`;
const BodyRule = styled.div`
  height: 1px;
  margin: 28px 0 7px;
  background: #c9c9c9;
`;
const Link = styled.span`
  color: #0563c1;
  text-decoration: underline;
  text-underline-offset: 2px;
`;
const B = styled.b`
  font-weight: 700;
`;
function Line({ w, quoted, children }) {
  return <BodyLine $quoted={quoted}>{children && <Text size={18.500} w={w}>{children}</Text>}</BodyLine>;
}
const Groups = () => (
  <svg width="23" height="20" viewBox="0 0 23 20" fill={BL}>
    <circle cx="5" cy="3" r="3" /><circle cx="18" cy="3" r="3" /><circle cx="11.500" cy="9" r="3.200" />
    <path d="M0 13V9Q0 7 2 7H6L8 10L6 13ZM23 13V9Q23 7 21 7H17L15 10L17 13ZM6 19V15Q6 13 9 13L11.500 15L14 13Q17 13 17 15V19Q11 21 6 19Z" />
  </svg>
);
function ReadingPane() {
  const blue = "#b4cdd8";
  return (
    <Reading>
      <Actions>
        <Action $mr={8}><OpenMail s={24} arrow="reply" /><Text w={43}>Reply</Text></Action>
        <Action $mr={8}><OpenMail s={24} arrow="reply" all /><Text w={68}>Reply All</Text></Action>
        <Action $mr={8}><OpenMail s={24} arrow="fwd" /><Text w={64}>Forward</Text></Action>
        <Action $mr={0}><IM /><Text w={19}>IM</Text></Action>
        <Divider />
        <Action $mr={5} $gap={4}><Groups /><Text w={72}>2 groups</Text></Action>
        <Chevron w={18} />
      </Actions>
      <Envelope>
        <svg width="79" height="72">
          <rect width="79" height="72" fill="#b1b1b1" /><rect width="7" height="72" fill={blue} />
          <ellipse cx="42" cy="25" rx="14" ry="16" fill="#fff" />
          <path d="M15 72L17 53Q19 43 31 41Q42 51 54 41Q67 43 69 53L71 72Z" fill="#fff" />
        </svg>
        <Sender>
          <SenderLine $h={24}><Text size={15.500} w={166}>Thu 6/23/2022 7:12 PM</Text></SenderLine>
          <SenderLine $h={40}><Text size={20.500} w={361} color="#777">Shan Gnanasambandham [Contractor]</Text></SenderLine>
          <SenderLine $h={30}><Text size={16.500} weight={600} w={537} color="#444">RE: Post Release Merge Status: release-12.15 to release-pecos-2.0</Text></SenderLine>
        </Sender>
      </Envelope>
      <Recipients>
        <RecipientKind><Text size={15} w={14}>To</Text></RecipientKind>
        <Presence $c={blue} /><Text size={16} w={98}>Naglaa Awad;</Text><Spacer $w={6} />
        <Presence $c={blue} /><Text size={16} w={104}>Banshari Patel;</Text><Spacer $w={6} />
        <Presence $c="#5ed054" /><Text size={16} w={212}>Harinath Paidela [Contractor];</Text><Spacer $w={6} />
        <Presence $c="#fff" /><Text size={16} w={100}>APSDevTeam;</Text><Spacer $w={7} />
        <Presence $c="#fff" /><Text size={16} w={98}>APSTestTeam</Text>
      </Recipients>
      <Recipients>
        <RecipientKind><Text size={15} w={16}>Cc</Text></RecipientKind>
        <Text size={16} w={132}><B>APS Operations</B>;</Text><Spacer $w={5} />
        <Presence $c={blue} /><Text size={16} w={79}>Aliza Robin</Text>
        <Spacer $w={779} /><Chevron dir="up" w={18} />
      </Recipients>
      <Rule $mt={8} />
      <AppBar>
        <Text w={84} color="#2b88d0">Phish Alert</Text>
        <MoreApps><svg width="13" height="13"><path d="M6.500 0V13M0 6.500H13" stroke="#666" strokeWidth="3" /></svg><Text w={118}>Get more apps</Text></MoreApps>
      </AppBar>
      <BodyRow>
        <Body>
          <Line w={57}>+Aliza.</Line>
          <Line />
          <Line w={529}>APSUI-New repo has been resolved for the merge conflicts.</Line>
          <Line w={976}>Release-12.15 branch is good. We can go ahead and cut a patch branch <B>patch-12.15.0.1</B> for the patch release</Line>
          <Line w={268}>being planned for next Friday.</Line>
          <Line />
          <Line w={68}>Thanks,</Line>
          <Line w={43}>Shan</Line>
          <BodyRule />
          <Line quoted w={404}><B>From:</B> Naglaa Awad &lt;<Link>nawad@tistatech.com</Link>&gt;</Line>
          <Line quoted w={348}><B>Sent:</B> Thursday, June 23, 2022 5:19 PM</Line>
          <Line quoted w={944}><B>To:</B> Banshari Patel &lt;<Link>bpatel@tistatech.com</Link>&gt;; Harinath Paidela [Contractor] &lt;<Link>hpaidela.ctr@tistatech.com</Link>&gt;;</Line>
          <Line quoted w={819}>APSDevTeam &lt;<Link>APSDevTeam@tistatech.com</Link>&gt;; APSTestTeam &lt;<Link>apstestteam@tistatech.com</Link>&gt;</Line>
          <Line quoted w={485}><B>Cc:</B> APS Operations &lt;<Link>APS_Operations@tistatech.com</Link>&gt;</Line>
          <Line quoted w={670}><B>Subject:</B> RE: Post Release Merge Status: release-12.15 to release-pecos-2.0</Line>
          <Line />
          <Line quoted w={106}>Hi Banshari,</Line>
        </Body>
        <ScrollBar h={487} thumb={76} />
      </BodyRow>
    </Reading>
  );
}

/* ---------- status bar ---------- */
const Status = styled.footer`
  height: 33px;
  flex: none;
  display: flex;
  align-items: center;
  background: #f0f0f0;
  border-top: 1px solid #bdbdbd;
  padding-left: 8px;
  color: #5a5a5a;
`;
const ViewButton = styled.div`
  width: 45px;
  height: 32px;
  background: #c8c8c8;
  display: flex;
  align-items: center;
  justify-content: center;
`;
function StatusBar() {
  return (
    <Status>
      <Text size={15} w={82}>Items: 7,091</Text>
      <Text size={15} w={173} ml={1035}>All folders are up to date.</Text>
      <Text size={15} w={234} ml={19}>Connected to: Microsoft Exchange</Text>
      <Spacer $w={20} />
      <ViewButton><svg width="19" height="18"><path d="M.75.750H18.250V17.250H.750ZM5.500 1V17" fill="none" stroke="#6a6a6a" strokeWidth="1.300" /></svg></ViewButton>
      <Spacer $w={13} />
      <svg width="19" height="18" fill="none" stroke="#6a6a6a" strokeWidth="1.200">
        <path d="M9.500 2Q5 0 .6 1V15.500Q5 15 9.500 17Q14 15 18.400 15.500V1Q14 0 9.500 2V17M3 4.500H7M3 7.500H7M3 10.500H7M3 13H7M12 4.500H16M12 7.500H16M12 10.500H16M12 13H16" />
      </svg>
      <Spacer $w={19} />
      <svg width="185" height="20"><path d="M0 10H11" stroke="#5a5a5a" strokeWidth="3" /><path d="M16 10.500H166" stroke="#a0a0a0" /><rect x="88" y="2" width="6" height="17" fill="#5f5f5f" /><path d="M171 10.500H185M178 3.500V17.500" stroke="#5a5a5a" strokeWidth="3" /></svg>
      <Spacer $w={16} />
      <Text size={15} w={39}>100%</Text>
    </Status>
  );
}

/* ---------- taskbar ---------- */
const Taskbar = styled.div`
  height: 60px;
  flex: none;
  display: flex;
  background: linear-gradient(90deg, #1d2430, #1f252e 25%, #1d2025 60%, #1e1f21);
  color: #fff;
`;
const Pinned = styled.div`
  width: 282px;
  padding-left: 24px;
  display: flex;
  align-items: center;
`;
const PinnedItem = styled.div`
  width: ${(p) => p.$w}px;
`;
const TaskButton = styled.div`
  width: 89px;
  margin-right: 1.8px;
  padding: 0 6px;
  background: ${(p) => p.$bg || "transparent"};
  border-bottom: ${(p) => (p.$bg ? `3px solid ${p.$line}` : "none")};
  background-image: ${(p) => (p.$bg ? "none" : "linear-gradient(#a8cdf8, #a8cdf8)")};
  background-size: 77px 3px;
  background-position: 6px bottom;
  background-repeat: no-repeat;
  display: flex;
  align-items: center;
  padding-top: ${(p) => (p.$bg ? 3 : 0)}px;
`;
const TaskIcon = styled.div`
  width: 38px;
  display: flex;
  justify-content: center;
  margin: 0 3px 0 1px;
`;
const Tray = styled.div`
  margin-left: 13px;
  display: flex;
  align-items: center;
  gap: 12px;
`;
const Clock = styled.div`
  width: 84px;
  margin-left: 14px;
  display: flex;
  flex-direction: column;
  align-items: center;
  justify-content: center;
  gap: 9px;
`;
const ShowDesktop = styled.div`
  width: 8px;
  margin-left: auto;
  border-left: 1px solid #777;
`;
const Cmd = () => (
  <svg width="34" height="29"><rect x=".5" y=".5" width="33" height="28" fill="#000" stroke="#8a8f94" /><rect x="1" y="1" width="32" height="4" fill="#ccd3d8" />
    <text x="4" y="15" fontSize="9" fontFamily="Liberation Mono, monospace" fontWeight="700" fill="#ddd">C:\_</text><path d="M1 20Q17 14 33 20V28H1Z" fill="#181818" /></svg>
);
const SvgWord = styled.text`
  font-family: "Open Sans", sans-serif;
  font-weight: 700;
  text-anchor: middle;
`;
const apps = [
  { t: "In...", w: 26, bg: "#4c5159", line: "#a8cdf8", icon: (
    <svg width="34" height="32"><path d="M1 4L20 0V32L1 28Z" fill="#0072c6" /><rect x="20" y="8" width="13" height="15" fill="#fff" stroke="#0072c6" strokeWidth="1.500" /><path d="M20 13L25 18L33 9" stroke="#0072c6" strokeWidth="2" fill="none" /><ellipse cx="10" cy="16" rx="4" ry="5" fill="none" stroke="#fff" strokeWidth="3" /></svg>) },
  { t: "se...", w: 28, bg: "#a5602b", line: "#ff7a05", icon: (
    <svg width="33" height="33" viewBox="0 0 33 33"><circle cx="16.500" cy="16.500" r="16.500" fill="#fcc934" /><path d="M2.200 8.200A16.500 16.500 0 0 1 30.800 8.200H16.500L9 20Z" fill="#ea4335" /><path d="M2.200 8.200L9.400 20.600Q12 25 17 24.500L16.500 33A16.500 16.500 0 0 1 2.200 8.200Z" fill="#34a853" /><path d="M16.500 33L23.500 20.500L17 24.500Z" fill="#34a853" /><circle cx="16.500" cy="16.500" r="8" fill="#fff" /><circle cx="16.500" cy="16.500" r="6.300" fill="#4285f4" /></svg>) },
  { t: "Sl...", w: 25, icon: (
    <svg width="34" height="34"><circle cx="17" cy="17" r="17" fill="#fff" /><g strokeWidth="4.200" strokeLinecap="round"><path d="M14 8V14" stroke="#36c5f0" /><path d="M8 14H14" stroke="#36c5f0" /><path d="M20 8V14M26 14H25" stroke="#2eb67d" /><path d="M20 20H26M20 26V25" stroke="#ecb22e" /><path d="M14 20V26M8 20H9" stroke="#e01e5a" /></g></svg>) },
  { t: "Liy...", w: 32, icon: (
    <svg width="36" height="36"><circle cx="20" cy="6" r="5.500" fill="#7b83eb" /><circle cx="31" cy="8" r="4" fill="#5059c9" /><rect x="24" y="13" width="12" height="15" rx="4" fill="#5059c9" /><rect x="11" y="13" width="17" height="20" rx="5" fill="#7b83eb" /><rect y="8" width="19" height="19" rx="2" fill="#4b53bc" /><path d="M5 13H14M9.500 13V23" stroke="#fff" strokeWidth="2.400" /><circle cx="29" cy="28" r="7.500" fill="#fccb2e" /><path d="M29 24V29L32 31" stroke="#fff" strokeWidth="1.800" fill="none" /></svg>) },
  { t: "Py...", w: 30, icon: (
    <svg width="22" height="32"><path d="M1 1H19V18L21 20V26H1Z" fill="#f7d774" /><path d="M1 1L7 4V32L1 27Z" fill="#fce9a5" /></svg>) },
  { t: "C:...", w: 27, icon: <Cmd /> },
  { t: "C:...", w: 27, icon: <Cmd /> },
  { t: "N...", w: 25, icon: (
    <svg width="31" height="31"><defs><linearGradient id="pc"><stop offset="0" stopColor="#21d789" /><stop offset=".5" stopColor="#cdea2a" /><stop offset="1" stopColor="#fcf84a" /></linearGradient></defs><rect width="31" height="31" fill="url(#pc)" /><rect x="4" y="4" width="23" height="23" fill="#000" /><SvgWord x="15" y="16" fontSize="11" fill="#fff">PC</SvgWord><path d="M7 23H15" stroke="#fff" strokeWidth="1.800" /></svg>) },
  { t: "ap...", w: 31, icon: (
    <svg width="34" height="34"><circle cx="17" cy="17" r="14.500" fill="none" stroke="#aaa" strokeWidth="4" strokeDasharray="4.100 3.500" /><circle cx="17" cy="17" r="12" fill="#201a30" stroke="#b9b9b9" strokeWidth="2" /><SvgWord x="17" y="16" fontSize="7.500" fill="#f08030">Java EE</SvgWord><SvgWord x="17" y="24" fontSize="7.500" fill="#f08030">IDE</SvgWord></svg>) },
  { t: "MI...", w: 32, icon: (
    <svg width="36" height="36"><g transform="rotate(45 18 18)"><rect x="6" y="6" width="11.500" height="11.500" fill="#f0716b" /><rect x="18.500" y="6" width="11.500" height="11.500" fill="#7ec455" /><rect x="6" y="18.500" width="11.500" height="11.500" fill="#72a7f5" /><rect x="18.500" y="18.500" width="11.500" height="11.500" fill="#fbd971" /></g><path d="M12 10L18 15V26M18 15L25 19" stroke="#262626" strokeWidth="2.500" fill="none" /><circle cx="18" cy="26" r="3" fill="#262626" /><circle cx="25" cy="18" r="3" fill="#262626" /><circle cx="18" cy="15" r="3" fill="#262626" /></svg>) },
  { t: "up...", w: 32, icon: (
    <svg width="36" height="36"><path d="M3 1L31 4L29 25L1 22Z" fill="#d4dae2" /><path d="M5 4L28 6L26 22L4 19Z" fill="#1c40d0" /><path d="M15 4L28 6L27 14Z" fill="#7fa7f5" /><path d="M10 24H20L22 30Q14 33 6 30Z" fill="#c2c8cf" /><circle cx="27" cy="27" r="8" fill="#e5e9e5" /><path d="M22 24L26 27L22 30M32 23L28 26L32 29" stroke="#3a9a3a" strokeWidth="2" fill="none" /></svg>) },
  { t: "*U...", w: 31, icon: (
    <svg width="34" height="34"><path d="M28 5L33 6L32 27L25 32Z" fill="#a87b3a" /><path d="M13 3L31 5L26 32L1 26Z" fill="#7fc3cf" /><path d="M13 3L31 5L30 12L10 11Z" fill="#b8e2e8" /><path d="M1 26L22 27L26 32Z" fill="#e9f4f6" /><path d="M13 2.500H31" stroke="#999" strokeWidth="3" strokeDasharray="1.500 1" /></svg>) },
  { t: "A...", w: 23, icon: (
    <svg width="36" height="36"><rect width="36" height="36" fill="#0968e0" /><path d="M19 0H36V36H14Z" fill="#1c8fec" /><path d="M22 12Q18 7 13 11Q9 15 14 18L20 21Q25 24 21 26Q17 28 14 25" fill="none" stroke="#fff" strokeWidth="3.500" strokeLinecap="round" /><circle cx="22" cy="6.500" r="2.300" fill="#fff" /><circle cx="14" cy="30.500" r="2.300" fill="#fff" /></svg>) },
  { t: "A...", w: 23, icon: (
    <svg width="36" height="36"><rect width="36" height="36" fill="#27bd55" /><rect x="5" y="5" width="26" height="26" fill="#25a04c" stroke="#fff" strokeWidth="3" /><path d="M12 11L25 18L12 25Z" fill="#fff" /></svg>) },
];
function TaskbarView() {
  return (
    <Taskbar>
      <Pinned>
        <PinnedItem $w={72}><svg width="25" height="25" fill="#fff"><path d="M0 4L10.500 2.500V12H0ZM12 2.300L25 .5V12H12ZM0 13.300H10.500V22.700L0 21.300ZM12 13.300H25V25L12 23Z" /></svg></PinnedItem>
        <PinnedItem $w={72}><svg width="24" height="24"><circle cx="12" cy="12" r="10" fill="none" stroke="#fff" strokeWidth="3.500" /></svg></PinnedItem>
        <PinnedItem $w={66}>
          <svg width="25" height="24" fill="none" stroke="#fff" strokeWidth="1.500"><path d="M1 1V4H16V1M1 7H16V17H1ZM1 23V20H16V23M22 0V5M22 12V24" /><path d="M20.500 8.500H24" strokeWidth="3.500" /></svg>
        </PinnedItem>
        <PinnedItem $w={34}>
          <svg width="33" height="33"><path d="M9 1L32 9V24L8 17Z" fill="#4db3f5" stroke="#222" /><path d="M9 1L32 9L20 20L8 17Z" fill="#7fd0ff" /><path d="M0 25L10 21L25 27L16 32Z" fill="#d4d7da" stroke="#777" strokeDasharray="2 1" /></svg>
        </PinnedItem>
      </Pinned>
      {apps.map((a, i) => (
        <TaskButton key={i} $bg={a.bg} $line={a.line}>
          <TaskIcon>{a.icon}</TaskIcon>
          <Text w={a.w}>{a.t}</Text>
        </TaskButton>
      ))}
      <Tray>
        <svg width="18" height="11"><path d="M1 10L9 2L17 10" fill="none" stroke="#fff" strokeWidth="1.500" /></svg>
        <svg width="25" height="16"><path d="M6 15A5.500 5.500 0 0 1 4 6A8 8 0 0 1 18 5A6 6 0 0 1 24 13Q22 16 19 15.500Z" fill="#0a63c4" /><path d="M2 13Q3 8 10 8L23 9Q26 13 22 15.500H5Q3 15 2 13Z" fill="#28a8ea" /></svg>
        <svg width="25" height="20" fill="none" stroke="#fff" strokeWidth="1.400"><path d="M8 7V5H21V17H5V13M21 9H24V13H21M1 4H8V8Q7 11 4.500 11T1 8ZM3 0V4M6 0V4" /><path d="M10 7.500H18.500V14.500H8L10 11Z" fill="#fff" stroke="none" /></svg>
        <svg width="25" height="20" fill="none" stroke="#fff" strokeWidth="1.400"><path d="M9 2H24V15H5V11M14 15V19M9 19H19M1 1H8V8H1ZM4.500 8V11M3 4H6" /></svg>
        <svg width="25" height="20" fill="none" stroke="#fff" strokeWidth="1.400"><path d="M1 7H4L9 2V18L4 13H1ZM12 7Q14 10 12 13M15.500 5Q19 10 15.500 15M19 2Q25 10 19 18" /></svg>
      </Tray>
      <Clock><Text w={65}>7:54 PM</Text><Text w={83}>6/23/2022</Text></Clock>
      <Tray>
        <FilterMark $ml={15}>
          <svg width="25" height="25"><path d="M0 0H24V17H14L10 22V17H0Z" fill="#fff" /><path d="M4 4H20M4 8H20M4 12H14" stroke="#1e1f21" strokeWidth="1.500" /><path d="M20 9Q26 20 13 20Q19 27 24 20Q26 14 20 9Z" fill="#fff" stroke="#1e1f21" /></svg>
        </FilterMark>
      </Tray>
      <ShowDesktop />
    </Taskbar>
  );
}

function TitleBar() {
  return (
    <Header>
      <HeaderArt />
      <TitleRow>
        <QuickBar>
          <svg width="24" height="24" fill="none" stroke="#fff" strokeWidth="1.300"><path d="M5 13H1V1H18V9M3 8H10" /><path d="M5.500 11H23V22.500H5.500ZM9 18H15M9 20H15" /><rect x="13" y="3" width="2" height="2" fill="#fff" /><rect x="18.500" y="13" width="2" height="2" fill="#fff" /><path d="M20 2H22M20 5H22M20 8H22M2 16H4M2 19H4M2 22H4" /></svg>
          <svg width="26" height="23" fill="none" stroke="#3c93d8" strokeWidth="3.200"><path d="M9 3L2 9L9 15M2 9H13Q20 10 20 16Q19 20 14 21" /></svg>
          <svg width="8" height="24"><path d="M0 10H8" stroke="#fff" strokeWidth="1.500" /><path d="M0 13H8L4 17Z" fill="#fff" transform="translate(0 -.5)" /></svg>
        </QuickBar>
        <ContextHead><Text size={16} w={82}>Group Tools</Text></ContextHead>
        <WindowTitle><Text w={310}>Inbox - mjalu@tistatech.com - Outlook</Text></WindowTitle>
        <WindowButtons>
          <WindowButton><svg width="20" height="16" fill="none" stroke="#fff" strokeWidth="1.300"><path d="M.7.700H19.300V15.300H.700ZM1 4H19M10 14V6M6 9.500L10 6L14 9.500" /></svg></WindowButton>
          <WindowButton><svg width="15" height="2"><path d="M0 1H15" stroke="#fff" strokeWidth="1.300" /></svg></WindowButton>
          <WindowButton><svg width="16" height="16" fill="none" stroke="#fff" strokeWidth="1.300"><path d="M.7 3.700H12V15.300H.700ZM3.700 3.500V.700H15.300V12H12" /></svg></WindowButton>
          <WindowButton><svg width="16" height="16"><path d="M.5.500L15.500 15.500M15.500.500L.5 15.500" stroke="#fff" strokeWidth="1.400" /></svg></WindowButton>
        </WindowButtons>
      </TitleRow>
      <TabRow>
        <Tab $w={88}><Text w={26}>File</Text></Tab>
        <Tab $w={76} $ml={6} $active><Text w={49}>Home</Text></Tab>
        <Tab $w={145}><Text w={115}>Send / Receive</Text></Tab>
        <Tab $w={78}><Text w={50}>Folder</Text></Tab>
        <Tab $w={67}><Text w={37}>View</Text></Tab>
        <Tab $w={95} $ml={3} $context><Text w={49}>Group</Text></Tab>
        <TellMe>
          <svg width="16" height="23" fill="none" stroke="#fff" strokeWidth="1.400"><path d="M5 17Q5 14 3 12Q1 10 1 7.500A7 7 0 0 1 15 7.500Q15 10 13 12Q11 14 11 17ZM5 19.500H11M6 22H10" /></svg>
          <Text w={238}>Tell me what you want to do...</Text>
        </TellMe>
      </TabRow>
    </Header>
  );
}

export default function App() {
  return (
    <>
      <Global />
      <Window>
        <TitleBar />
        <RibbonBar />
        <Main>
          <Sidebar />
          <MessageList />
          <ReadingPane />
        </Main>
        <StatusBar />
        <TaskbarView />
      </Window>
    </>
  );
}
